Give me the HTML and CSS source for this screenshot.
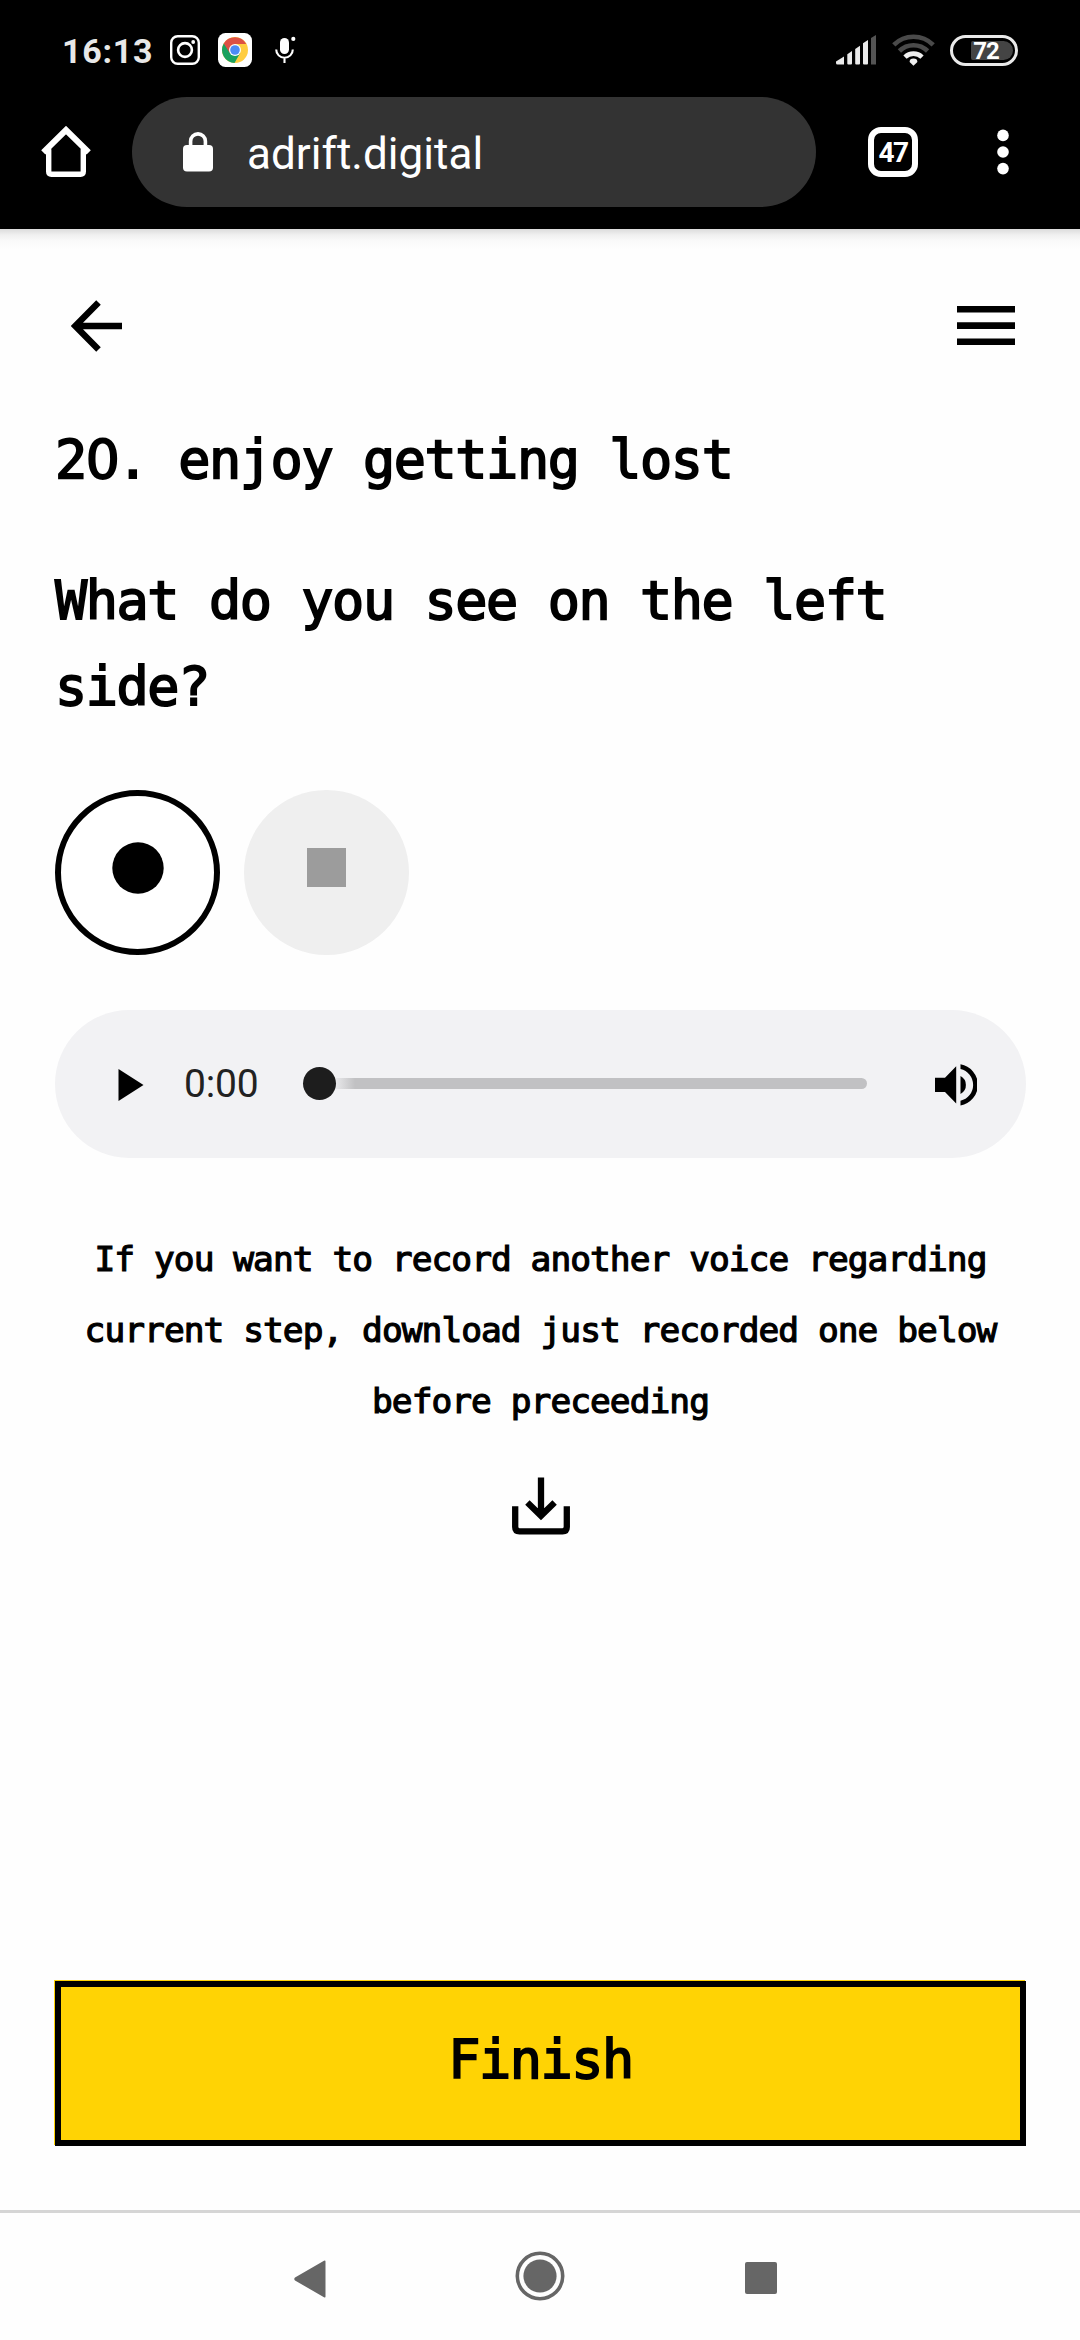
FILE: index.html
```html
<!DOCTYPE html>
<html lang="en">
<head>
<meta charset="utf-8">
<title>adrift.digital</title>
<link rel="stylesheet" href="styles.css">
</head>
<body>
<header class="chrome">
  <div class="status">
    <span class="clock">16:13</span>
    <svg class="insta" width="30" height="30" viewBox="0 0 30 30" fill="none" stroke="#fff"><rect x="1.2" y="1.2" width="27.6" height="27.6" rx="6.5" stroke-width="2.4"/><circle cx="15" cy="15" r="6.9" stroke-width="2.6"/><circle cx="23.2" cy="7" r="1.9" fill="#fff" stroke="none"/></svg>
    <svg class="browser" width="34" height="34" viewBox="0 0 34 34"><rect width="34" height="34" rx="7.5" fill="#fff"/><circle cx="17" cy="17" r="13" fill="#ffcd40"/><path d="M17 17 5.74 10.5A13 13 0 0 0 16.5 30L22.2 20Z" fill="#19a15f"/><path d="M5.74 10.5A13 13 0 0 1 28.26 11L17 11 11.8 20Z" fill="#dd5144"/><circle cx="17" cy="17" r="6" fill="#fff"/><circle cx="17" cy="17" r="4.8" fill="#4c8bf5"/></svg>
    <svg class="mic" width="22" height="28" viewBox="0 0 22 28"><rect x="5" y="2" width="9" height="16" rx="4.5" fill="#fff"/><path d="M1.2 13.5a8.3 8.3 0 0 0 16.6 0M9.5 22v5" fill="none" stroke="#fff" stroke-width="2.1"/><circle cx="18.3" cy="2.9" r="2.1" fill="#fff"/></svg>
    <svg class="signal" width="41" height="30" viewBox="0 0 41 30" fill="#eaeaea"><path d="M0 26.5 8 21.5V29.5H1.5Q0 29.5 0 28Z"/><path d="M11.3 19.2 16 16V28.5q0 1-1 1h-2.7q-1 0-1-1Z"/><path d="M19.2 14 24 10.8V28.5q0 1-1 1h-2.8q-1 0-1-1Z"/><path d="M27 8.2 32 5V28.5q0 1-1 1h-3q-1 0-1-1Z"/><path d="M35 3 40 0V29.5H35Z" fill="#545454"/></svg>
    <svg class="wifi" width="43" height="32" viewBox="0 0 43 32" fill="none" stroke-width="4.6"><path d="M1.8 10.8a28 28 0 0 1 39.4 0" stroke="#4a4a4a"/><path d="M7.4 17a20 20 0 0 1 28.2 0" stroke="#4a4a4a"/><path d="M13 23.2a12 12 0 0 1 17 0" stroke="#f0f0f0"/><path d="M21.5 31.8 17.6 28q0-3.4 3.9-3.4t3.9 3.4Z" fill="#f0f0f0"/></svg>
    <span class="battery"><span class="charge"></span><span class="level">72</span></span>
  </div>
  <div class="toolbar">
    <svg class="home" width="52" height="52" viewBox="0 0 52 52" fill="none" stroke="#fff" stroke-width="6" stroke-linejoin="round" stroke-linecap="round"><path d="M8.7 24V45.5q0 2.7 2.7 2.7H40.6q2.7 0 2.7-2.7V24" stroke-width="5.4"/><path d="M3.3 26.3 26 4 48.7 26.3" stroke-linejoin="miter" stroke-linecap="butt"/></svg>
    <div class="address">
      <svg width="30" height="40" viewBox="0 0 30 40"><rect y="13" width="30" height="26.5" rx="4" fill="#fff"/><path d="M7.6 15V9.3a7.4 7.4 0 0 1 14.8 0V15" fill="none" stroke="#fff" stroke-width="3.6"/></svg>
      <span class="host">adrift.digital</span>
    </div>
    <span class="tabs">47</span>
    <svg class="more" width="12" height="46" viewBox="0 0 12 46" fill="#fff"><circle cx="6" cy="6.4" r="5.8"/><circle cx="6" cy="23" r="5.8"/><circle cx="6" cy="39.6" r="5.8"/></svg>
  </div>
</header>
<main class="page">
  <nav class="topnav">
    <svg width="51" height="52" viewBox="0 0 51 52" fill="none" stroke="#000" stroke-width="6.4"><path d="M51 26H5M27.5 2.5 4.3 26 27.5 49.5"/></svg>
    <svg width="58" height="40" viewBox="0 0 58 40"><path d="M0 0H58V6.6H0ZM0 16.2H58V23H0ZM0 32.4H58V39H0Z"/></svg>
  </nav>
  <h1 class="title">2<span class="zero">0</span>. enjoy getting lost</h1>
  <h2 class="question">What do you see on the left side?</h2>
  <div class="recorder">
    <button class="round record"><svg width="52" height="52" viewBox="0 0 52 52"><circle cx="26" cy="26" r="25.7"/></svg></button>
    <button class="round stop" disabled><span class="square"></span></button>
  </div>
  <div class="player">
    <svg class="play" width="26" height="32" viewBox="0 0 26 32"><path d="M.5 0 25.5 16 .5 32Z"/></svg>
    <span class="elapsed">0:00</span>
    <span class="track"><span class="knob"></span></span>
    <svg class="volume" width="42" height="42" viewBox="0 0 42 42"><path d="M0 13.7H10L21.2 2.2V39.6L10 28H0Z"/><path d="M25.5 12a10.2 10.2 0 0 1 0 18Z"/><path d="M25.5.3A20.9 20.9 0 0 1 25.5 41.5V36.7A16.2 16.2 0 0 0 25.5 5.1Z"/></svg>
  </div>
  <p class="hint">If you want to record another voice regarding current step, download just recorded one below before preceeding</p>
  <svg class="download" width="58" height="58" viewBox="0 0 58 58" fill="none" stroke="#000" stroke-width="6.3"><path d="M3.2 29.2V50q0 4.3 4.3 4.3H50.5q4.3 0 4.3-4.3V29.2M29 .5V38M15.4 25.5 29 38.8 42.6 25.5"/></svg>
  <button class="finish">Finish</button>
</main>
<footer class="sysnav">
  <svg class="back" width="32" height="38" viewBox="0 0 32 38" fill="#666"><path d="M30 .7Q31.5-.2 31.5 1.5V36.5Q31.5 38.2 30 37.2L1 20.5Q-.5 19 1 17.5Z"/></svg>
  <svg class="circle" width="50" height="52" viewBox="0 0 50 52"><circle cx="25" cy="26" r="22.7" fill="none" stroke="#666" stroke-width="3.6"/><circle cx="25" cy="26" r="16.6" fill="#666"/></svg>
  <span class="recent"></span>
</footer>
</body>
</html>
```

FILE: styles.css
```css
* { box-sizing: border-box; }
body {
  margin: 0;
  width: 1080px;
  height: 2340px;
  display: flex;
  flex-direction: column;
  background: #fefefe;
  color: #000;
  font-family: "DejaVu Sans Mono", monospace;
  overflow: hidden;
}
svg { display: block; flex: none; }
button { font: inherit; color: inherit; padding: 0; border: 0; }

.chrome { height: 229px; background: #000; color: #fff; font-family: Roboto, sans-serif; flex: none; }
.status { height: 97px; padding: 3px 62px 0 62px; display: flex; align-items: center; }
.clock { width: 90px; font-size: 34px; font-weight: 700; line-height: 40px; letter-spacing: .7px; color: #e8e8e8; padding-top: 2px; white-space: nowrap; }
.insta { margin-left: 18px; }
.browser { margin-left: 18px; }
.mic { margin-left: 23px; }
.signal { margin-left: auto; }
.wifi { margin-left: 15px; }
.battery {
  position: relative;
  width: 68px;
  height: 31px;
  margin-left: 15px;
  border: 3px solid #eaeaea;
  border-radius: 16px;
}
.charge { position: absolute; left: 18px; top: 3px; right: 2px; bottom: 3px; background: #444; border-radius: 2px 10px 10px 2px; }
.level { position: absolute; inset: 0; font-size: 24px; line-height: 26px; font-weight: 700; text-align: center; letter-spacing: -1px; padding-left: 4px; }

.toolbar { height: 110px; padding-left: 40px; display: flex; align-items: center; }
.address { margin-left: 40px; width: 684px; height: 110px; border-radius: 55px; background: #333; display: flex; align-items: center; padding-left: 51px; }
.host { margin-left: 34px; font-size: 44px; line-height: 50px; padding-top: 3px; letter-spacing: .05px; }
.tabs { margin-left: 52px; width: 50px; height: 50px; border: 6px solid #fff; border-radius: 13px; font-size: 28px; line-height: 39px; font-weight: 700; text-align: center; letter-spacing: -1.5px; }
.more { margin-left: 79px; }

.page {
  flex: 1;
  display: flex;
  flex-direction: column;
  padding: 71px 54px 64px 55px;
  background: linear-gradient(#dcdcdc, #f0f0f0 6px, #fafafa 12px, #fefefe 20px);
}
.topnav { height: 52px; padding: 0 11px 0 16px; display: flex; justify-content: space-between; align-items: center; }
.title, .question, .finish { font-size: 53.5px; font-weight: 400; letter-spacing: -1.42px; -webkit-text-stroke: 1.8px #000; }
.title { margin: 65px 0 0; line-height: 86px; }
.zero { font-family: "DejaVu Sans", sans-serif; letter-spacing: -3.2px; }
.question { margin: 55px 0 0; line-height: 86px; }
.recorder { display: flex; gap: 24px; margin-top: 60px; }
.round { width: 165px; height: 165px; border-radius: 50%; display: flex; align-items: center; justify-content: center; padding-bottom: 10px; }
.record { border: 6px solid #000; background: #fff; }
.stop { background: #efefef; }
.square { width: 39px; height: 39px; background: #9c9c9c; }
.player { margin-top: 55px; height: 148px; border-radius: 74px; background: #f2f2f4; display: flex; align-items: center; padding-left: 63px; flex: none; }
.play { margin-top: 2px; }
.elapsed { width: 75px; margin-left: 40px; font-family: Roboto, sans-serif; font-size: 39px; line-height: 46px; letter-spacing: -.2px; color: #222; white-space: nowrap; }
.track { width: 564px; height: 11px; margin-left: 44px; margin-bottom: 1px; border-radius: 6px; background: linear-gradient(90deg, #f2f2f4 28px, #c1c1c3 52px); display: flex; align-items: center; }
.knob { width: 33px; height: 33px; flex: none; border-radius: 50%; background: #1d1d1d; }
.volume { margin-left: 68px; margin-top: 2px; }
.hint { margin: 66px 0 0; font-size: 34.5px; line-height: 71px; letter-spacing: -.95px; text-align: center; -webkit-text-stroke: 1.2px #000; }
.download { align-self: center; margin-top: 40px; }
.finish {
  margin-top: auto;
  height: 165px;
  background: #ffd304;
  border: 6px solid #000;
  box-shadow: -1px -1px 0 #ffd304;
  padding-bottom: 9px;
}

.sysnav { height: 130px; flex: none; border-top: 3px solid #d5d5d5; display: flex; align-items: flex-start; padding-left: 294px; }
.back { margin-top: 47px; }
.circle { margin: 37px 0 0 189px; }
.recent { width: 32px; height: 32px; margin: 49px 0 0 180px; border-radius: 2px; background: #666; }
```
